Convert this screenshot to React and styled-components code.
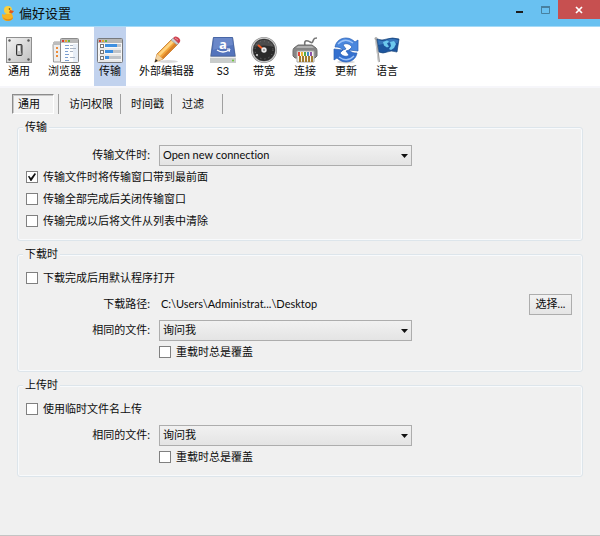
import React from 'react';
import styled, { createGlobalStyle } from 'styled-components';

const GlobalStyle = createGlobalStyle`
  * {
    box-sizing: border-box;
  }

  body {
    margin: 0;
    background: #f0f0f0;
    color: #0c0c0c;
    font-family: Lato, 'Noto Sans CJK SC', sans-serif;
    font-size: 11px;
    line-height: 14px;
    font-variant-ligatures: none;
  }

  button,
  select,
  input {
    font: inherit;
    font-variant-ligatures: none;
    color: inherit;
    margin: 0;
  }
`;

const Window = styled.div`
  display: flex;
  flex-direction: column;
  min-height: 100vh;
  border-bottom: 1px solid #c4c4c4;
`;

const TitleBar = styled.header`
  display: flex;
  align-items: flex-start;
  height: 27px;
  padding-left: 1px;
  background: #69c1f1;
  border-bottom: 1px solid #a5daf7;
`;

const Title = styled.h1`
  display: flex;
  align-items: center;
  gap: 4px;
  flex: 1;
  height: 26px;
  margin: 0;
  font-size: 13px;
  line-height: 18px;
  font-weight: 400;
`;

const CaptionButton = styled.button`
  display: flex;
  align-items: center;
  justify-content: center;
  width: ${props => (props.$close ? '42px' : '26px')};
  height: 19px;
  padding: 0;
  border: none;
  background: ${props => (props.$close ? '#c75050' : 'transparent')};
`;

const Toolbar = styled.nav`
  display: flex;
  gap: 9px;
  height: 61px;
  padding-left: 3px;
  background: #ffffff;
  border-bottom: 2px solid #f6f6fa;
`;

const ToolButton = styled.button`
  display: flex;
  flex-direction: column;
  align-items: center;
  flex: none;
  min-width: 32px;
  padding: 9px 4px 0;
  border: none;
  white-space: nowrap;
  background: ${props => (props.$active ? '#c1d2ee' : 'transparent')};

  svg {
    display: block;
    margin: 0 -2px;
    overflow: visible;
  }
`;

const Tabs = styled.div`
  display: flex;
  height: 20px;
  margin: 6px 0 0 12px;
`;

const Tab = styled.button`
  min-width: 51px;
  padding: 0 7px 0 10px;
  border: none;
  border-right: 1px solid #a0a0a0;
  background: transparent;
  text-align: left;
`;

const ActiveTab = styled.button`
  width: 42px;
  padding: 0 5px;
  border: 1px solid;
  border-color: #8c8c8c #ffffff #ffffff #8c8c8c;
  box-shadow: inset 1px 1px 0 #c8c8c8;
  background: #f3f3f3;
  text-align: left;
`;

const TabDivider = styled.span`
  width: 5px;
  border-right: 1px solid #a0a0a0;
`;

const Panel = styled.main`
  display: flex;
  flex-direction: column;
  gap: 6px;
  padding: 6px 17px 16px;
`;

const Group = styled.fieldset`
  min-width: 0;
  margin: 0;
  padding: 6px 10px 8px 8px;
  border: 1px solid #dde5eb;
  border-radius: 3px;
  box-shadow: inset 0 0 0 1px #f8fafc;
`;

const Legend = styled.legend`
  margin-left: -3px;
  padding: 0 2px;
  background: #f0f0f0;
`;

const FieldRow = styled.div`
  display: grid;
  grid-template-columns: 124px minmax(0, 253px) 1fr;
  column-gap: 9px;
  align-items: center;
  height: 22px;
  margin-top: 4px;
`;

const FieldLabel = styled.label`
  text-align: right;
`;

const PathText = styled.output`
  padding-left: 2px;
`;

const SelectBox = styled.div`
  position: relative;

  svg {
    position: absolute;
    right: 4px;
    top: 9px;
    pointer-events: none;
  }
`;

const Select = styled.select`
  display: block;
  width: 100%;
  height: 21px;
  padding: 0 20px 0 3px;
  appearance: none;
  border: 1px solid #adadad;
  border-radius: 0;
  background: linear-gradient(#f1f1f1, #e4e4e4);
`;

const PushButton = styled.button`
  justify-self: end;
  width: 43px;
  height: 21px;
  padding: 0;
  border: 1px solid #adadad;
  background: linear-gradient(#f2f2f2, #e5e5e5);
`;

const CheckLabel = styled.label`
  display: flex;
  align-items: center;
  gap: 5px;
  height: 22px;
  margin-left: ${props => (props.$indent ? '133px' : '0')};
`;

const CheckInput = styled.input`
  display: grid;
  place-items: center;
  width: 12px;
  height: 12px;
  appearance: none;
  border: 1px solid #808080;
  background: #ffffff;

  &:checked::after {
    content: '';
    width: 8px;
    height: 8px;
    background: #111111;
    clip-path: polygon(0 45%, 14% 34%, 37% 62%, 84% 0, 100% 12%, 42% 100%, 32% 100%);
  }
`;

const DuckIcon = () => (
  <svg width="14" height="15" viewBox="0 0 14 15">
    <path d="M1 8c2 1 3 1 5-1h4c1 1 2 3 2 4 0 3-3 4-6 4s-5-2-5-7z" fill="#f7b422" />
    <path d="M2 11c2 3 8 3 10 0 0 5-9 5-10 0z" fill="#e08c1a" />
    <circle cx="7" cy="4" r="4" fill="#fcd03c" />
    <path d="m9 4 4 1-2 2.500-3-1z" fill="#e0561b" />
    <circle cx="8.500" cy="3" r=".8" fill="#473511" />
  </svg>
);

const Icon = ({ children }) => (
  <svg width="28" height="28" viewBox="0 0 28 28" aria-hidden="true">
    {children}
  </svg>
);

const GeneralIcon = () => (
  <Icon>
    <defs>
      <linearGradient id="plate" x1="0" y1="0" x2="1" y2="1">
        <stop offset="0" stopColor="#f4f4f4" />
        <stop offset="1" stopColor="#bfbfbf" />
      </linearGradient>
    </defs>
    <rect x="1.500" y="1.500" width="25" height="25" fill="url(#plate)" stroke="#8f8f8f" />
    {[[4.5, 4.5], [23.5, 4.5], [4.5, 23.5], [23.5, 23.5]].map(([x, y]) => (
      <circle key={`${x}-${y}`} cx={x} cy={y} r="1.200" fill="#555" />
    ))}
    <rect x="11.500" y="8.500" width="5.500" height="11" rx="1" fill="#777" stroke="#333" />
    <path d="M12.500 9.500h3v5l1 4h-4z" fill="#f2f2f2" />
    <path d="M13 15h3v3h-3z" fill="#c4c4c4" />
  </Icon>
);

const BrowserIcon = () => (
  <Icon>
    <path d="M3 6h9v20H2.500L2 9z" fill="#eeeeee" stroke="#9a9a9a" />
    <path d="M2 6h10v3H2z" fill="#bcbcbc" />
    <path d="M6 11v2M6 15v2M6 19v2" stroke="#ee8b38" strokeWidth="2" />
    <rect x="9.500" y="2.500" width="18" height="24" rx="1" fill="#fdfdfd" stroke="#8b8b8b" />
    <path d="M10 3h17v4H10z" fill="#b9b9b9" />
    <path d="M11 4h2v2h-2z" fill="#d83a2f" />
    <path d="M14 4h2v2h-2z" fill="#e7a52a" />
    <path d="M17 4h2v2h-2z" fill="#67ae3d" />
    <path d="M22 8h5v18h-5z" fill="#e7eef7" />
    <path d="M14 9.500h4M14 12.500h4M14 15.500h3M14 18.500h4M14 21.500h3M14 24.500h4" stroke="#7c9fd0" />
    <path d="M19 9.500h3M19 12.500h6M19 15.500h3M19 21.500h5" stroke="#a9b4c3" />
  </Icon>
);

const TransferIcon = () => (
  <Icon>
    <rect x="1.500" y="2.500" width="25" height="24" rx="1" fill="#f6f6f6" stroke="#77797d" />
    <path d="M2 3h24v4H2z" fill="#b7b7b7" />
    <path d="M3 4h2v2H3z" fill="#d83a2f" />
    <path d="M6 4h2v2H6z" fill="#e7a52a" />
    <path d="M9 4h2v2H9z" fill="#67ae3d" />
    {[[8, 12], [14, 8], [20, 4]].map(([y, width]) => (
      <g key={y}>
        <rect x="4.500" y={y + 0.5} width="3" height="3" fill="#fff" stroke="#777" />
        <rect x="9" y={y} width="16" height="3" fill="#bfc3c8" />
        <rect x="9" y={y} width={width} height="3" fill="#3d8fe0" />
        <path d={`M3 ${y + 5}h22`} stroke="#dadada" />
      </g>
    ))}
  </Icon>
);

const PencilIcon = () => (
  <Icon>
    <ellipse cx="15" cy="25.500" rx="10" ry="1.500" fill="#d9d9d9" />
    <path d="M2 26 4 18 19 3l6 5L10 23z" fill="#f2a53a" stroke="#b96d1e" strokeWidth=".7" />
    <path d="M5 18 20 3l2 2L7 20z" fill="#ffd37f" />
    <path d="M8 22 23 6l2 2-15 15z" fill="#d9822a" />
    <path d="m4 18 6 5-8 3z" fill="#f2d3a2" />
    <path d="m2.800 23 2 1.800L1.500 26.500z" fill="#222" />
    <path d="m18 4 2-2 6 5-2 2z" fill="#c8cbd1" stroke="#8b8e95" strokeWidth=".5" />
    <path d="m20 2 2-1.500q2-.5 4 1.500 2 2 1 4l-1.500 1.500z" fill="#cf4350" />
    <path d="m22 2 3 2" stroke="#ee929a" />
  </Icon>
);

const DriveIcon = () => (
  <Icon>
    <path d="M4 1h20l3 20v5q0 1-1 1H2q-1 0-1-1v-5z" fill="#b6babd" />
    <path d="M4.500 1.500h19L26 20H2z" fill="#5474bc" stroke="#4866a6" />
    <path d="M5 2h18l1 7Q14 10 4 14z" fill="#6b88c9" />
    <path d="M1 21h26v5q0 1-1 1H2q-1 0-1-1z" fill="#c9cccb" />
    <path d="M1 21.500h26" stroke="#eeeeee" />
    <circle cx="24" cy="24.500" r="1" fill="#68c52e" />
    <text x="14" y="13" textAnchor="middle" fontFamily="Open Sans" fontSize="13" fontWeight="700" fill="#fff">a</text>
    <path d="M8 14q6 4 12 0" fill="none" stroke="#fff" strokeWidth="1.300" />
    <path d="m18 13 3 0-1 3" fill="none" stroke="#fff" />
  </Icon>
);

const GaugeIcon = () => (
  <Icon>
    <circle cx="14" cy="14" r="13" fill="#8e8e8e" />
    <circle cx="14" cy="14" r="12" fill="none" stroke="#cfcfcf" />
    <circle cx="14" cy="14" r="11" fill="#2b2b2b" />
    <path d="M4 11a10.500 10.500 0 0 1 20 0Q14 8 4 11z" fill="#4c4c4c" />
    <circle cx="14" cy="14" r="9" fill="none" stroke="#777" strokeDasharray="1 3.200" />
    <path d="m14 14-6-5" stroke="#f05a24" strokeWidth="2" />
    <circle cx="14" cy="14" r="2.700" fill="#e8e8e8" />
    <circle cx="14" cy="14" r="1" fill="#8c8c8c" />
    <circle cx="7" cy="19" r="1" fill="#ddd" />
  </Icon>
);

const ConnectIcon = () => (
  <Icon>
    <path d="M14 10C13 6 14 4 17 5s4 3 5 0 2-3 4-3" fill="none" stroke="#777" strokeWidth="1.700" />
    <path d="M7 9h14l4 3q1 1 1 3v5l-2 2H4l-2-2v-5q0-2 1-3z" fill="#868686" stroke="#6c6c6c" />
    <path d="M7 10h14l2 2H5z" fill="#b0b0b0" />
    <path d="M6 15h17v11H6z" fill="#f8f6ef" stroke="#a6a6a6" />
    {['#e04539', '#eeb52e', '#56a844', '#408cc9', '#9154a7'].map((color, i) => (
      <g key={color}>
        <rect x={7 + i * 3} y="16" width="2" height="4" fill={color} />
        <rect x={8 + i * 3} y="20" width="2" height="6" fill="#a17b2e" />
      </g>
    ))}
  </Icon>
);

const UpdateIcon = () => (
  <Icon>
    <ellipse cx="14" cy="26" rx="9" ry="1.500" fill="#dcdcdc" />
    {/* two identical arrows, the lower one turned half way round */}
    {[0, 180].map(angle => (
      <g key={angle} transform={`rotate(${angle} 14 14)`}>
        <path
          d="M3 11C4 5 9 2 14 2c4 0 7 2 9 4l3-2v11l-9-1 3-3c-3-4-7-4-9-2l3 4-3 1c-3-3-5-3-8-3z"
          fill={angle ? '#3470cf' : '#4a87de'}
          stroke="#2a60b5"
          strokeWidth=".7"
        />
        <path d="M6 8q7-7 15-1" fill="none" stroke="#9dc3f7" strokeWidth="1.300" />
      </g>
    ))}
  </Icon>
);

const FlagIcon = () => (
  <Icon>
    <path d="M3 3 6 26" stroke="#999" strokeWidth="2" />
    <path d="m2.500 3 3 23" stroke="#e3e3e3" strokeWidth=".7" />
    <circle cx="3" cy="2.500" r="1.500" fill="#aaa" />
    <path d="M4 3q5 2 10 0t12 0l-2 13q-6-2-10 0T6 16z" fill="#1c559e" stroke="#164479" strokeWidth=".7" />
    <path d="M5 4q5 2 9 0t11 0l-.5 3Q16 6 5.500 9z" fill="#3877bb" />
    <path d="m10 6 4-1.500 2 1-2 2 2 3-2 1-3-2zM17 6l4-1 2 3-2 4-3 2-2-1 2-3z" fill="#6cc8ed" />
  </Icon>
);

const tools = [
  { label: '通用', icon: <GeneralIcon /> },
  { label: '浏览器', icon: <BrowserIcon /> },
  { label: '传输', icon: <TransferIcon />, active: true },
  { label: '外部编辑器', icon: <PencilIcon /> },
  { label: 'S3', icon: <DriveIcon /> },
  { label: '带宽', icon: <GaugeIcon /> },
  { label: '连接', icon: <ConnectIcon /> },
  { label: '更新', icon: <UpdateIcon /> },
  { label: '语言', icon: <FlagIcon /> }
];

const Checkbox = ({ label, indent, defaultChecked }) => (
  <CheckLabel $indent={indent}>
    <CheckInput type="checkbox" defaultChecked={defaultChecked} />
    {label}
  </CheckLabel>
);

const SelectField = ({ id, label, options }) => (
  <FieldRow>
    <FieldLabel htmlFor={id}>{label}</FieldLabel>
    <SelectBox>
      <Select id={id}>
        {options.map(option => (
          <option key={option}>{option}</option>
        ))}
      </Select>
      <svg width="7" height="4" viewBox="0 0 7 4">
        <path d="M0 0h7L3.500 4z" fill="#111" />
      </svg>
    </SelectBox>
  </FieldRow>
);

const App = () => {
  return (
    <>
      <GlobalStyle />
      <Window>
        <TitleBar>
          <Title>
            <DuckIcon />
            偏好设置
          </Title>
          <CaptionButton aria-label="最小化">
            <svg width="7" height="8" viewBox="0 0 7 8">
              <path d="M0 5h7v2H0z" fill="#1c1c1c" />
            </svg>
          </CaptionButton>
          <CaptionButton aria-label="最大化">
            <svg width="9" height="8" viewBox="0 0 9 8">
              <path d="M.5 1h8v6.500h-8z" fill="none" stroke="#47809f" />
              <path d="M0 1h9" stroke="#47809f" strokeWidth="2" />
            </svg>
          </CaptionButton>
          <CaptionButton $close aria-label="关闭">
            <svg width="8" height="8" viewBox="0 0 8 8">
              <path d="m1 1 6 6M7 1 1 7" stroke="#fff" strokeWidth="1.700" />
            </svg>
          </CaptionButton>
        </TitleBar>

        <Toolbar>
          {tools.map(tool => (
            <ToolButton key={tool.label} $active={tool.active}>
              {tool.icon}
              {tool.label}
            </ToolButton>
          ))}
        </Toolbar>

        <Tabs role="tablist">
          <ActiveTab role="tab" aria-selected="true">通用</ActiveTab>
          <TabDivider />
          <Tab role="tab">访问权限</Tab>
          <Tab role="tab">时间戳</Tab>
          <Tab role="tab">过滤</Tab>
        </Tabs>

        <Panel>
          <Group>
            <Legend>传输</Legend>
            <SelectField id="transfer-mode" label="传输文件时:" options={['Open new connection']} />
            <Checkbox label="传输文件时将传输窗口带到最前面" defaultChecked />
            <Checkbox label="传输全部完成后关闭传输窗口" />
            <Checkbox label="传输完成以后将文件从列表中清除" />
          </Group>

          <Group>
            <Legend>下载时</Legend>
            <Checkbox label="下载完成后用默认程序打开" />
            <FieldRow>
              <FieldLabel htmlFor="download-path">下载路径:</FieldLabel>
              <PathText id="download-path">C:\Users\Administrat...\Desktop</PathText>
              <PushButton>选择...</PushButton>
            </FieldRow>
            <SelectField id="download-existing" label="相同的文件:" options={['询问我']} />
            <Checkbox label="重载时总是覆盖" indent />
          </Group>

          <Group>
            <Legend>上传时</Legend>
            <Checkbox label="使用临时文件名上传" />
            <SelectField id="upload-existing" label="相同的文件:" options={['询问我']} />
            <Checkbox label="重载时总是覆盖" indent />
          </Group>
        </Panel>
      </Window>
    </>
  );
};

export default App;
